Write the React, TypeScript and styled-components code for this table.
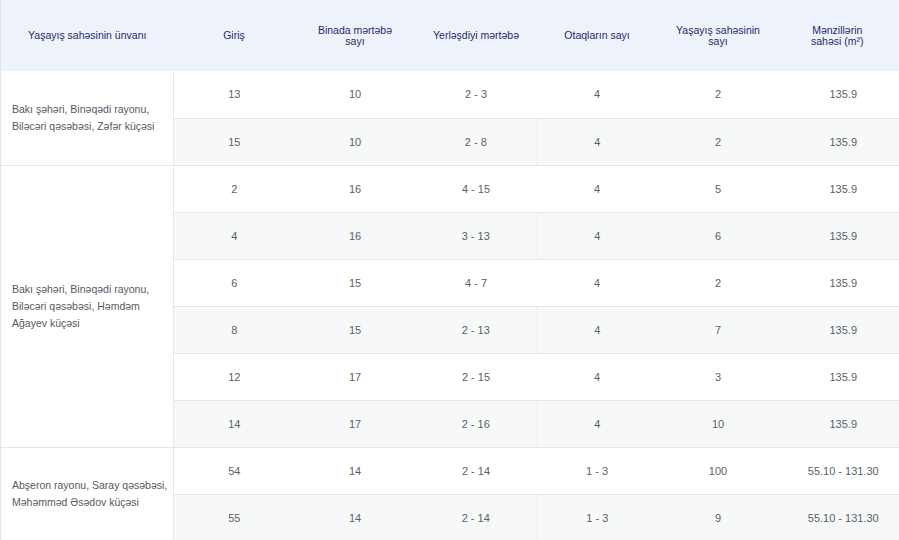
import * as React from "react";
import styled, { createGlobalStyle } from "styled-components";

const GlobalStyle = createGlobalStyle`
    html, body {
        margin: 0;
        padding: 0;
        background: #fff;
        overflow: hidden;
    }
    body {
        font-family: "Liberation Sans", Arial, sans-serif;
    }
`;

interface IEntrance {
    entrance: string;
    floors: string;
    located: string;
    rooms: string;
    count: string;
    area: string;
}

interface IBuilding {
    address: string;
    entrances: Array<IEntrance>;
}

const HEADERS = [
    "Giriş",
    "Binada mərtəbə sayı",
    "Yerləşdiyi mərtəbə",
    "Otaqların sayı",
    "Yaşayış sahəsinin sayı",
];

const BUILDINGS: Array<IBuilding> = [
    {
        address: "Bakı şəhəri, Binəqədi rayonu, Biləcəri qəsəbəsi, Zəfər küçəsi",
        entrances: [
            { entrance: "13", floors: "10", located: "2 - 3", rooms: "4", count: "2", area: "135.9" },
            { entrance: "15", floors: "10", located: "2 - 8", rooms: "4", count: "2", area: "135.9" },
        ],
    },
    {
        address: "Bakı şəhəri, Binəqədi rayonu, Biləcəri qəsəbəsi, Həmdəm Ağayev küçəsi",
        entrances: [
            { entrance: "2", floors: "16", located: "4 - 15", rooms: "4", count: "5", area: "135.9" },
            { entrance: "4", floors: "16", located: "3 - 13", rooms: "4", count: "6", area: "135.9" },
            { entrance: "6", floors: "15", located: "4 - 7", rooms: "4", count: "2", area: "135.9" },
            { entrance: "8", floors: "15", located: "2 - 13", rooms: "4", count: "7", area: "135.9" },
            { entrance: "12", floors: "17", located: "2 - 15", rooms: "4", count: "3", area: "135.9" },
            { entrance: "14", floors: "17", located: "2 - 16", rooms: "4", count: "10", area: "135.9" },
        ],
    },
    {
        address: "Abşeron rayonu, Saray qəsəbəsi, Məhəmməd Əsədov küçəsi",
        entrances: [
            { entrance: "54", floors: "14", located: "2 - 14", rooms: "1 - 3", count: "100", area: "55.10 - 131.30" },
            { entrance: "55", floors: "14", located: "2 - 14", rooms: "1 - 3", count: "9", area: "55.10 - 131.30" },
        ],
    },
];

const Table = styled.table`
    width: 908px;
    table-layout: fixed;
    border-collapse: collapse;
    border-spacing: 0;
    border-left: 1px solid #e4e6e6;
`;

const HeadRow = styled.tr`
    height: 71px;
    background: #eef3fb;
`;

const HeadCell = styled.th<{ $left?: number; $right?: number }>`
    padding: 0 ${props => props.$right ?? 13}px 0 ${props => props.$left ?? 13}px;
    font-size: 10.5px;
    line-height: 11px;
    font-weight: 500;
    color: #1d2a6b;
    text-align: center;
    vertical-align: middle;
`;

const BodyRow = styled.tr<{ $shaded: boolean }>`
    height: 47px;
    background: ${props => props.$shaded ? "#f7f9f9" : "#fff"};
`;

const AddressCell = styled.td`
    padding: 0 4px 0 11px;
    background: #fff;
    border-right: 1px solid #e6e8e8;
    border-bottom: 1px solid #e6e8e8;
    font-size: 10.5px;
    line-height: 17px;
    color: #555a5e;
    text-align: left;
    vertical-align: middle;
`;

const ValueCell = styled.td<{ $divider?: boolean }>`
    padding: 0 6px;
    border-bottom: 1px solid #e6e8e8;
    border-left: ${props => props.$divider ? "1px solid #f0f2f2" : "none"};
    font-size: 11px;
    color: #5b5f66;
    text-align: center;
    vertical-align: middle;
    white-space: nowrap;
`;

export default function App(): JSX.Element {
    let index = 0;

    return (
        <>
            <GlobalStyle />
            <Table>
                <colgroup>
                    <col style={{ width: 173 }} />
                    <col style={{ width: 121 }} />
                    <col style={{ width: 121 }} />
                    <col style={{ width: 121 }} />
                    <col style={{ width: 121 }} />
                    <col style={{ width: 121 }} />
                    <col />
                </colgroup>
                <thead>
                    <HeadRow>
                        <HeadCell $left={20} $right={20}>Yaşayış sahəsinin ünvanı</HeadCell>
                        {HEADERS.map(title => <HeadCell key={title}>{title}</HeadCell>)}
                        <HeadCell $left={28} $right={40}>Mənzillərin sahəsi (m²)</HeadCell>
                    </HeadRow>
                </thead>
                <tbody>
                    {BUILDINGS.map(building =>
                        building.entrances.map((item, i) => {
                            const shaded = index++ % 2 === 1;
                            return (
                                <BodyRow key={building.address + item.entrance} $shaded={shaded}>
                                    {i === 0 &&
                                        <AddressCell rowSpan={building.entrances.length}>
                                            {building.address}
                                        </AddressCell>
                                    }
                                    <ValueCell>{item.entrance}</ValueCell>
                                    <ValueCell>{item.floors}</ValueCell>
                                    <ValueCell>{item.located}</ValueCell>
                                    <ValueCell $divider={shaded}>{item.rooms}</ValueCell>
                                    <ValueCell>{item.count}</ValueCell>
                                    <ValueCell>{item.area}</ValueCell>
                                </BodyRow>
                            );
                        })
                    )}
                </tbody>
            </Table>
        </>
    );
}
